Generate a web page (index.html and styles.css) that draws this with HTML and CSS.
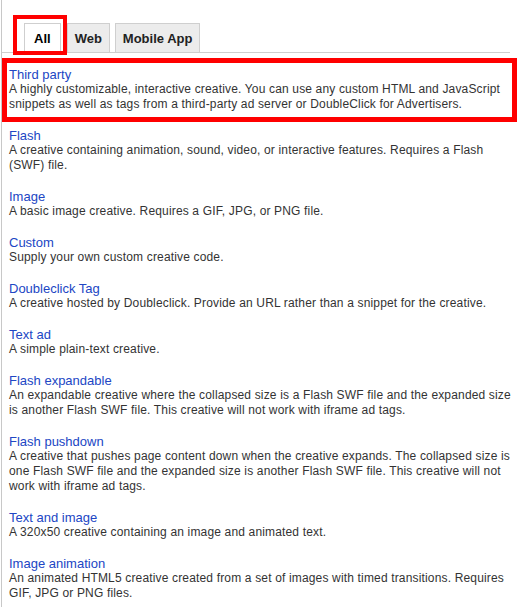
FILE: index.html
```html
<!DOCTYPE html>
<html>
<head>
<meta charset="utf-8">
<link rel="stylesheet" href="styles.css">
</head>
<body>
<div class="panel">
  <div class="tabs">
    <div class="tab tab-active">All</div>
    <div class="tab">Web</div>
    <div class="tab">Mobile App</div>
    <div class="annot-tab"></div>
  </div>
  <div class="list">
    <div class="item item-highlight">
      <div class="title">Third party</div>
      <div class="desc">A highly customizable, interactive creative. You can use any custom HTML and JavaScript<br>snippets as well as tags from a third-party ad server or DoubleClick for Advertisers.</div>
    </div>
    <div class="item">
      <div class="title">Flash</div>
      <div class="desc">A creative containing animation, sound, video, or interactive features. Requires a Flash<br>(SWF) file.</div>
    </div>
    <div class="item">
      <div class="title">Image</div>
      <div class="desc">A basic image creative. Requires a GIF, JPG, or PNG file.</div>
    </div>
    <div class="item">
      <div class="title">Custom</div>
      <div class="desc">Supply your own custom creative code.</div>
    </div>
    <div class="item">
      <div class="title">Doubleclick Tag</div>
      <div class="desc">A creative hosted by Doubleclick. Provide an URL rather than a snippet for the creative.</div>
    </div>
    <div class="item">
      <div class="title">Text ad</div>
      <div class="desc">A simple plain-text creative.</div>
    </div>
    <div class="item">
      <div class="title">Flash expandable</div>
      <div class="desc">An expandable creative where the collapsed size is a Flash SWF file and the expanded size<br>is another Flash SWF file. This creative will not work with iframe ad tags.</div>
    </div>
    <div class="item">
      <div class="title">Flash pushdown</div>
      <div class="desc">A creative that pushes page content down when the creative expands. The collapsed size is<br>one Flash SWF file and the expanded size is another Flash SWF file. This creative will not<br>work with iframe ad tags.</div>
    </div>
    <div class="item">
      <div class="title">Text and image</div>
      <div class="desc">A 320x50 creative containing an image and animated text.</div>
    </div>
    <div class="item">
      <div class="title">Image animation</div>
      <div class="desc">An animated HTML5 creative created from a set of images with timed transitions. Requires<br>GIF, JPG or PNG files.</div>
    </div>
  </div>
</div>
</body>
</html>
```

FILE: styles.css
```css
html, body {
  margin: 0;
  padding: 0;
  background: #fff;
  height: 100%;
  overflow: hidden;
}
body {
  font-family: "Liberation Sans", Arial, sans-serif;
}
.panel {
  margin-left: 1px;
  border-left: 1px solid #c8c8c8;
  width: 509px;
  min-height: 607px;
  padding-top: 22px;
  box-sizing: border-box;
}
.tabs {
  position: relative;
  display: flex;
  align-items: flex-end;
  gap: 5px;
  padding-left: 22px;
  border-bottom: 1px solid #cfcfcf;
  height: 30px;
}
.tab {
  height: 29px;
  box-sizing: border-box;
  border: 1px solid #cfcfcf;
  border-bottom: none;
  background: #ececec;
  font-weight: bold;
  font-size: 13px;
  color: #222;
  padding: 0 7px;
  display: flex;
  align-items: center;
  justify-content: center;
}
.tab-active {
  background: #fff;
  height: 30px;
  margin-bottom: -1px;
  padding: 0 9px;
  margin-right: 1px;
  color: #000;
}
.annot-tab {
  position: absolute;
  left: 11px;
  top: -7px;
  width: 54px;
  height: 40px;
  border: 4px solid #ff0000;
  box-sizing: border-box;
}
.list {
  padding-top: 5px;
}
.item {
  padding-left: 7px;
  margin-bottom: 16px;
}
.item-highlight {
  border: 5px solid #ff0000;
  width: 515px;
  box-sizing: border-box;
  padding: 4px 0 5px 2px;
  margin-bottom: 6px;
}
.title {
  font-size: 13px;
  line-height: 15px;
  color: #2146c4;
}
.desc {
  font-size: 12px;
  letter-spacing: 0.16px;
  line-height: 15px;
  color: #333;
  white-space: nowrap;
}
```
